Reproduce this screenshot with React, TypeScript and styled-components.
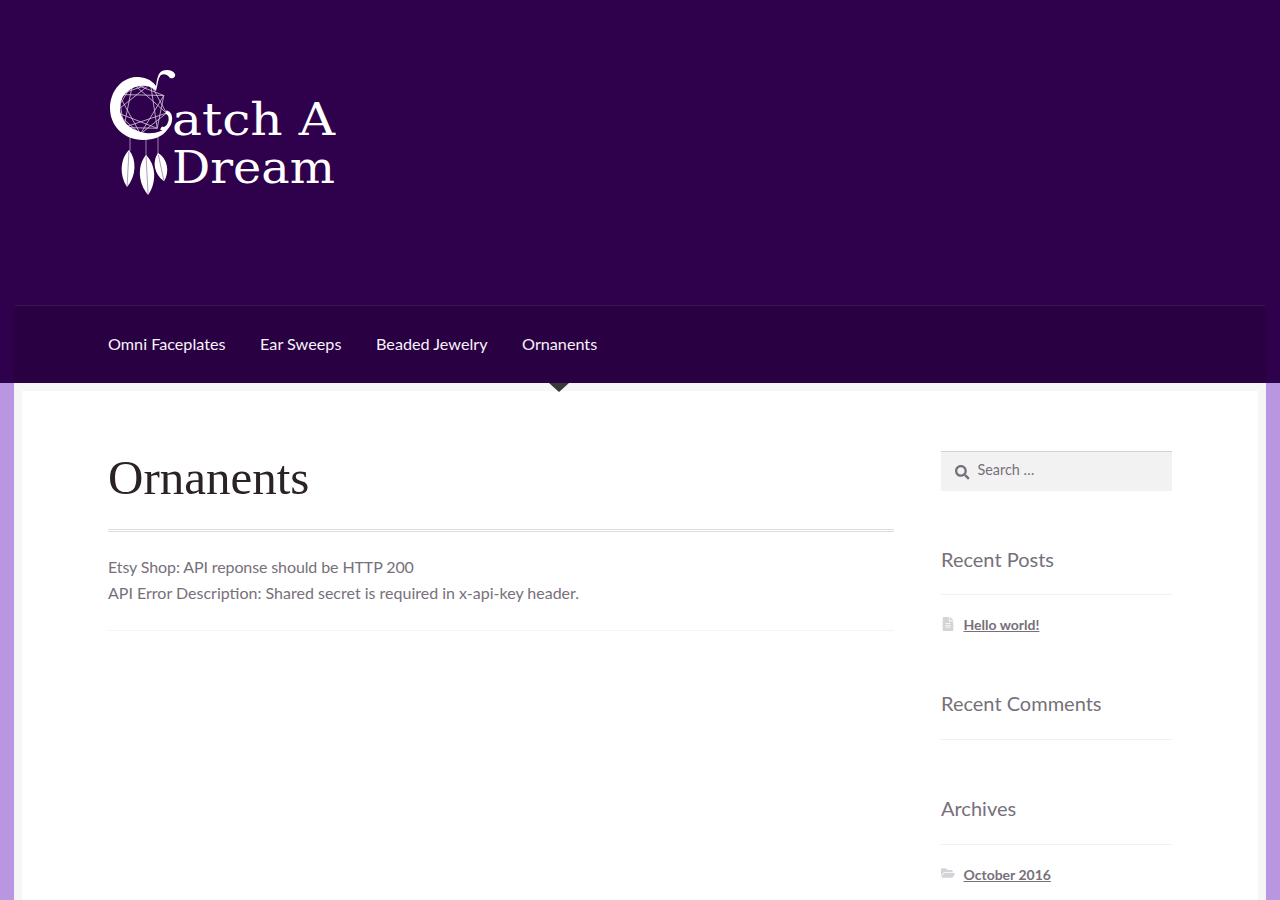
import React from "react";
import styled, { createGlobalStyle } from "styled-components";
import { FaSearch, FaFileAlt, FaFolderOpen } from "react-icons/fa";

const Global = createGlobalStyle`
  html, body { margin: 0; padding: 0; height: 900px; overflow: hidden; background: #b996e2; }
  body { font-family: Lato, "Liberation Sans", sans-serif; font-size: 16px; color: #77707a; }
`;

const Masthead = styled.header`
  height: 383px;
  background: #2f004c;
  display: flex;
  flex-direction: column;
  justify-content: space-between;
`;
const LogoLink = styled.a`
  display: block;
  width: 230px;
  height: 130px;
  margin: 68px 0 0 108px;
`;
const NavBar = styled.nav`
  height: 77px;
  margin: 0 14px;
  padding-left: 94px;
  background: #290042;
  border-top: 1px solid #3d1359;
  border-radius: 4px 4px 0 0;
  display: flex;
  align-items: center;
  gap: 34.6px;
`;
const NavItem = styled.a<{ $current?: boolean }>`
  position: relative;
  color: #f8f3fb;
  font-size: 16.2px;
  font-weight: 400;
  line-height: 75px;
  margin-bottom: 2px;
  ${(p) =>
    p.$current &&
    `&::after {
      content: "";
      position: absolute;
      left: 50%;
      bottom: -11px;
      margin-left: -11px;
      border: 10px solid transparent;
      border-bottom: 0;
      border-top: 9px solid #3b373b;
    }`}
`;
const Frame = styled.div`
  margin: 0 14px;
  height: 517px;
  padding: 8px 8px 0;
  background: #f6f6f6;
  box-sizing: border-box;
`;
const Sheet = styled.div`
  height: 100%;
  background: #fff;
  padding: 60px 86px 0;
  box-sizing: border-box;
  display: grid;
  grid-template-columns: 786px 231px;
  column-gap: 47px;
  align-items: start;
`;
const Article = styled.article`
  display: flex;
  flex-direction: column;
`;
const Title = styled.h1`
  margin: 0;
  height: 78px;
  font-family: "Liberation Serif", serif;
  font-weight: 400;
  font-size: 49px;
  line-height: 53px;
  color: #2b2226;
  border-bottom: 3px double #dedede;
`;
const Body = styled.div`
  padding: 22px 0 24px;
  line-height: 26px;
  border-bottom: 1px solid #f4f4f4;
`;
const Line = styled.p<{ $tracking?: number }>`
  margin: 0;
  letter-spacing: ${(p) => p.$tracking ?? 0}px;
`;
const Sidebar = styled.aside`
  display: flex;
  flex-direction: column;
`;
const SearchBox = styled.label`
  height: 39px;
  background: #f2f2f2;
  border-top: 1px solid #d2d2d2;
  display: flex;
  align-items: center;
  gap: 8px;
  padding-left: 14px;
  font-size: 14.4px;
  line-height: 35px;
  color: #77707a;
  span { margin-bottom: 4px; }
  svg { font-size: 14.5px; margin-top: 2px; }
`;
const Widget = styled.section<{ $top: number }>`
  margin-top: ${(p) => p.$top}px;
  display: flex;
  flex-direction: column;
`;
const WidgetTitle = styled.h3`
  margin: 0;
  height: 49.500px;
  font-size: 20px;
  font-weight: 400;
  line-height: 28px;
  color: #77707a;
  border-bottom: 1px solid #f1f1f1;
`;
const ListRow = styled.div`
  margin-top: 20px;
  display: flex;
  align-items: center;
  height: 20px;
  font-size: 14px;
  line-height: 20px;
`;
const RowIcon = styled.span`
  width: 22.5px;
  display: flex;
  align-items: center;
  color: #d6d3d8;
  font-size: 14px;
  margin-top: -3px;
`;
const RowLink = styled.a`
  font-weight: 700;
  color: #77707a;
  text-decoration: underline;
`;
const LogoWord = styled.text`
  font-family: "DejaVu Serif", serif;
  font-size: 44px;
  fill: #fff;
`;

const webPath = (() => {
  const cx = 141, cy = 108, r = 26, n = 9;
  const pts = Array.from({ length: n }, (_, i) => {
    const a = (i / n) * Math.PI * 2 - 0.5;
    return [cx + r * Math.cos(a), cy + r * Math.sin(a)];
  });
  let d = "";
  pts.forEach((p, i) => {
    const q = pts[(i + 3) % n];
    d += `M${p[0].toFixed(1)} ${p[1].toFixed(1)}L${q[0].toFixed(1)} ${q[1].toFixed(1)}`;
  });
  pts.forEach((p, i) => {
    const q = pts[(i + 2) % n];
    d += `M${p[0].toFixed(1)} ${p[1].toFixed(1)}L${q[0].toFixed(1)} ${q[1].toFixed(1)}`;
  });
  return d;
})();

const Feather = ({ x, y, h, w, rot }: { x: number; y: number; h: number; w: number; rot: number }) => (
  <g transform={`rotate(${rot} ${x} ${y})`}>
    <path
      d={`M${x} ${y}C${x + w} ${y + h * 0.25} ${x + w} ${y + h * 0.7} ${x} ${y + h}C${x - w} ${y + h * 0.7} ${x - w} ${y + h * 0.25} ${x} ${y}Z`}
      fill="#fff"
    />
    <path d={`M${x} ${y + 2}V${y + h - 1}`} stroke="#8d76a0" strokeWidth="0.7" />
  </g>
);

const Logo = () => (
  <svg viewBox="108 68 230 130" width="230" height="130">
    <path d={webPath} fill="none" stroke="#d8cce0" strokeWidth="0.8" />
    <path d="M130 137V151M146 139V156M158 137V154" stroke="#b8a6c6" strokeWidth="0.8" />
    <path
      d="M156 86C151 79 144 77 136 77C120 78 110 93 110 108C110 126 124 140 143 140C156 140 166 135 170 125C164 131 155 134 146 133C131 131 120 121 120 108C120 96 129 87 141 86C147 85 152 87 156 91C158 84 158 78 161 75C164 73 168 75 170 78C173 79 176 77 175 74C173 70 167 69 162 71C158 73 157 79 156 86Z"
      fill="#fff"
    />
    <path d="M166 112C170 113 171 117 170 122C168 128 164 130 161 128" fill="none" stroke="#fff" strokeWidth="3.500" />
    <Feather x={129} y={150} h={37} w={8.5} rot={3} />
    <Feather x={146} y={155} h={40} w={9.5} rot={-3} />
    <Feather x={158} y={153} h={29} w={8} rot={-12} />
    <LogoWord x="172" y="135" textLength="163" lengthAdjust="spacingAndGlyphs">
      atch A
    </LogoWord>
    <LogoWord x="172" y="183" textLength="163" lengthAdjust="spacingAndGlyphs">
      Dream
    </LogoWord>
  </svg>
);

export default function App() {
  return (
    <>
      <Global />
      <Masthead>
        <LogoLink aria-label="Catch A Dream">
          <Logo />
        </LogoLink>
        <NavBar>
          <NavItem>Omni Faceplates</NavItem>
          <NavItem>Ear Sweeps</NavItem>
          <NavItem>Beaded Jewelry</NavItem>
          <NavItem $current>Ornanents</NavItem>
        </NavBar>
      </Masthead>
      <Frame>
        <Sheet>
          <Article>
            <Title>Ornanents</Title>
            <Body>
              <Line $tracking={-0.11}>Etsy Shop: API reponse should be HTTP 200</Line>
              <Line>API Error Description: Shared secret is required in x-api-key header.</Line>
            </Body>
          </Article>
          <Sidebar>
            <SearchBox>
              <FaSearch />
              <span>Search …</span>
            </SearchBox>
            <Widget $top={53.6}>
              <WidgetTitle>Recent Posts</WidgetTitle>
              <ListRow>
                <RowIcon>
                  <FaFileAlt />
                </RowIcon>
                <RowLink>Hello world!</RowLink>
              </ListRow>
            </Widget>
            <Widget $top={54}>
              <WidgetTitle>Recent Comments</WidgetTitle>
            </Widget>
            <Widget $top={54.8}>
              <WidgetTitle>Archives</WidgetTitle>
              <ListRow>
                <RowIcon>
                  <FaFolderOpen />
                </RowIcon>
                <RowLink>October 2016</RowLink>
              </ListRow>
            </Widget>
          </Sidebar>
        </Sheet>
      </Frame>
    </>
  );
}
